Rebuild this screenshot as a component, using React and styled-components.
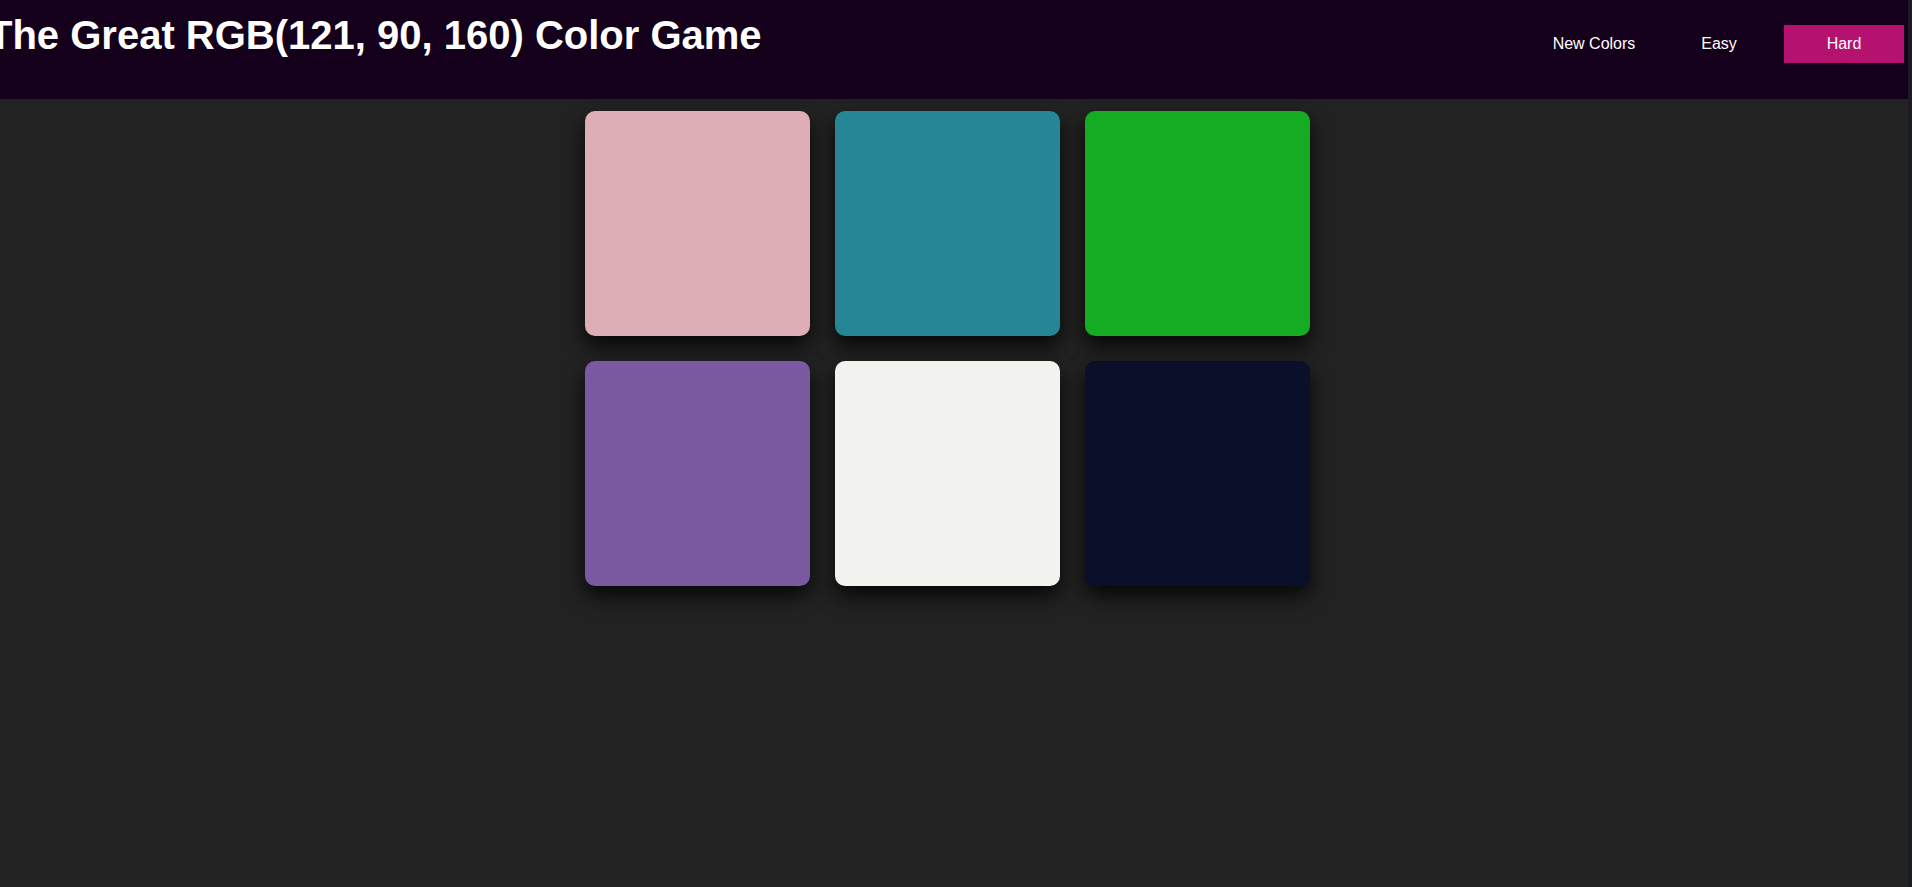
import React, { useState } from 'react'
import styled, { createGlobalStyle } from 'styled-components'

const GlobalStyle = createGlobalStyle`
  * { box-sizing: border-box; }
  html, body {
    margin: 0;
    padding: 0;
    height: 100%;
  }
  body {
    background-color: #222222;
    font-family: "Liberation Sans", Arial, sans-serif;
    border-right: 4px solid #1b1b24;
    min-height: 100vh;
  }
`

const colors = [
  'rgb(221, 174, 181)',
  'rgb(39, 134, 150)',
  'rgb(21, 171, 34)',
  'rgb(121, 90, 160)',
  'rgb(242, 242, 238)',
  'rgb(10, 15, 42)',
]

const App = () => {
  const [mode, setMode] = useState('hard')

  return (
    <>
      <GlobalStyle />
      <Header>
        <Title>The Great RGB(121, 90, 160) Color Game</Title>
        <Nav>
          <NavButton>New Colors</NavButton>
          <NavButton $active={mode === 'easy'} onClick={() => setMode('easy')}>Easy</NavButton>
          <NavButton $active={mode === 'hard'} onClick={() => setMode('hard')}>Hard</NavButton>
        </Nav>
      </Header>
      <Board>
        {colors.map((c, i) => (
          <Square key={i} style={{ backgroundColor: c }} />
        ))}
      </Board>
    </>
  )
}

const Header = styled.header`
  display: flex;
  justify-content: space-between;
  align-items: flex-start;
  height: 99px;
  background-color: #14001a;
  padding-right: 4px;
`

const Title = styled.h1`
  margin: 13px 0 0 -12px;
  color: white;
  font-size: 40px;
  font-weight: bold;
  white-space: nowrap;
`

const Nav = styled.nav`
  display: flex;
  gap: 5px;
  margin-top: 25px;
`

const NavButton = styled.button`
  width: 120px;
  height: 38px;
  border: none;
  outline: none;
  font-family: inherit;
  font-size: 16px;
  color: white;
  background-color: ${(p) => (p.$active ? '#b5126f' : 'transparent')};
  cursor: pointer;
`

const Board = styled.div`
  display: grid;
  grid-template-columns: repeat(3, 225px);
  gap: 25px;
  width: fit-content;
  margin: 12px auto 0;
  padding-right: 13px;
`

const Square = styled.div`
  width: 225px;
  height: 225px;
  border-radius: 10px;
  box-shadow: 0 10px 20px rgba(0, 0, 0, 0.8);
`

export default App
